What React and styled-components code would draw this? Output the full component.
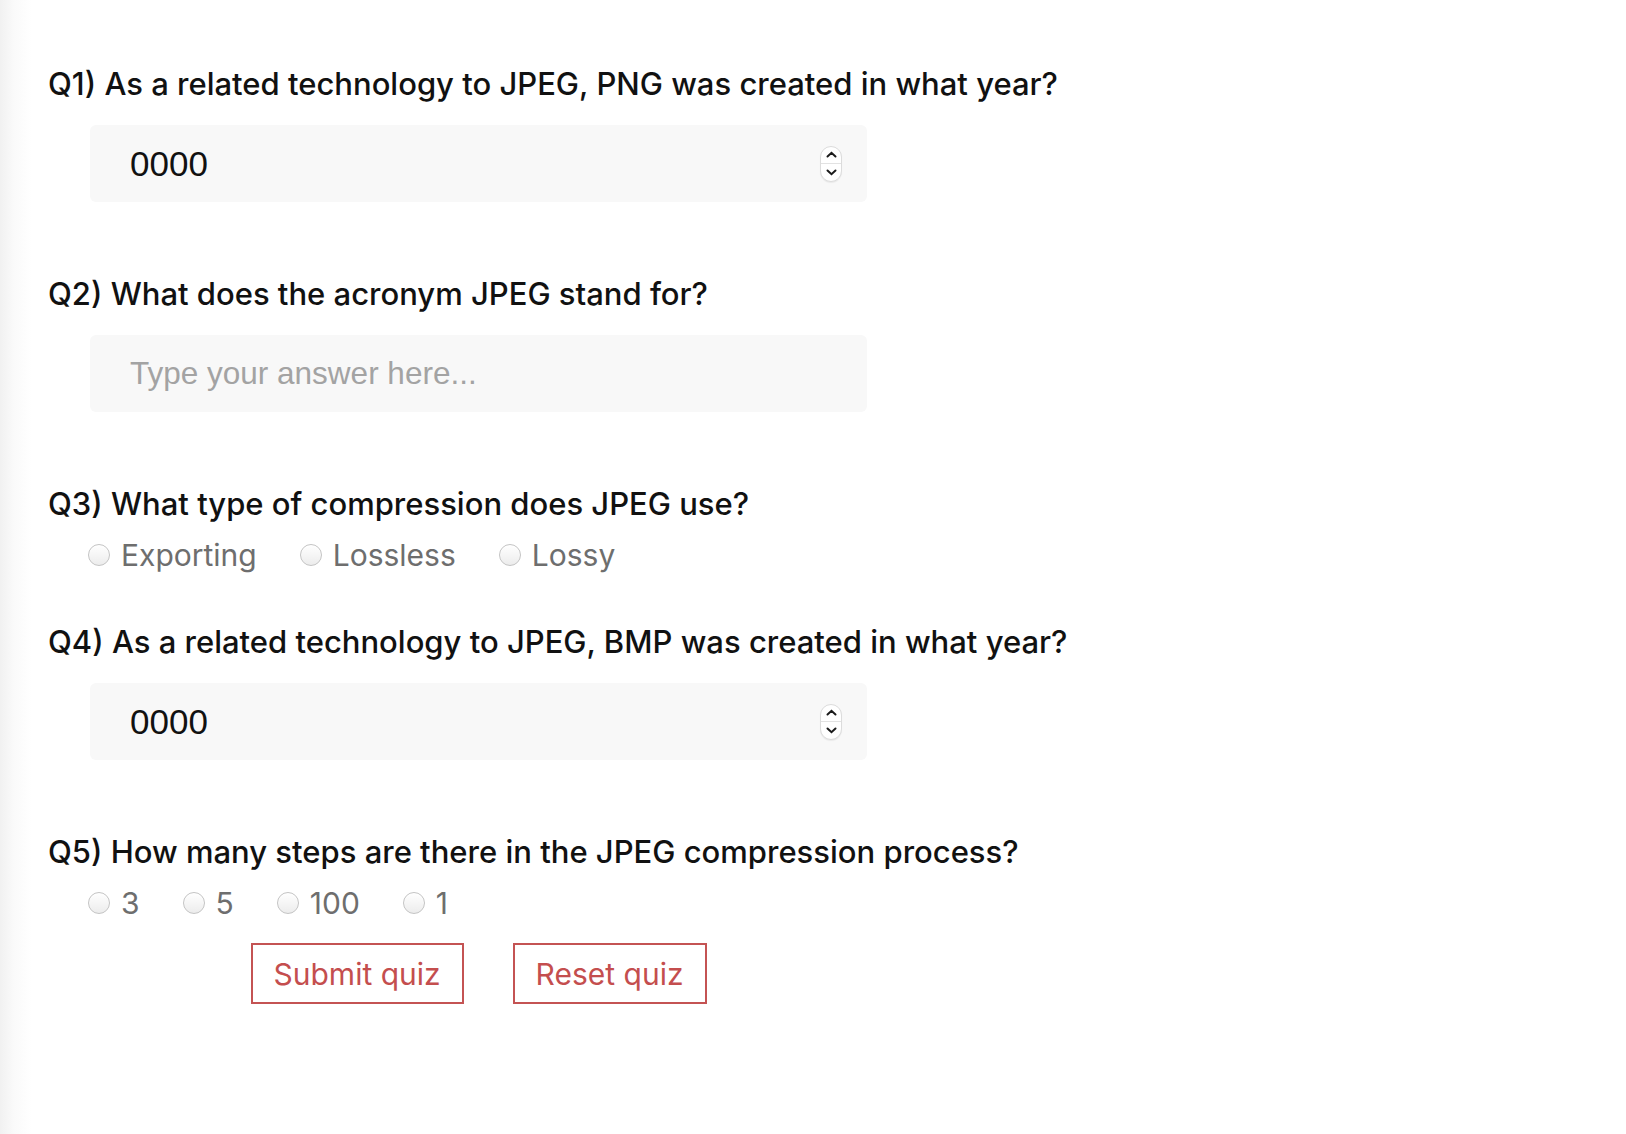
import React from "react";
import styled, { createGlobalStyle } from "styled-components";

const GlobalStyle = createGlobalStyle`
  html, body {
    margin: 0;
    padding: 0;
    min-height: 100%;
  }
  body {
    background: linear-gradient(to right, #f1f1f1 0px, #fafafa 14px, #ffffff 32px);
    min-height: 1134px;
    font-family: Inter, "Noto Sans", sans-serif;
    color: #111;
  }
`;

const questions = [
  {
    id: 1,
    title: "As a related technology to JPEG, PNG was created in what year?",
    type: "number",
  },
  { id: 2, title: "What does the acronym JPEG stand for?", type: "text" },
  {
    id: 3,
    title: "What type of compression does JPEG use?",
    type: "radio",
    options: ["Exporting", "Lossless", "Lossy"],
  },
  {
    id: 4,
    title: "As a related technology to JPEG, BMP was created in what year?",
    type: "number",
  },
  {
    id: 5,
    title: "How many steps are there in the JPEG compression process?",
    type: "radio",
    options: ["3", "5", "100", "1"],
  },
];

const Spinner = () => (
  <SpinBox>
    <svg width="11" height="7" viewBox="0 0 11 7">
      <path d="M1.5 5.5 L5.5 1.8 L9.5 5.5" fill="none" stroke="#1a1a1a" strokeWidth="2" strokeLinecap="round" />
    </svg>
    <SpinLine />
    <svg width="11" height="7" viewBox="0 0 11 7">
      <path d="M1.5 1.5 L5.5 5.2 L9.5 1.5" fill="none" stroke="#1a1a1a" strokeWidth="2" strokeLinecap="round" />
    </svg>
  </SpinBox>
);

const Answer = ({ q }) => {
  if (q.type === "radio") {
    return (
      <RadioRow>
        {q.options.map((opt) => (
          <RadioLabel key={opt}>
            <Radio type="radio" name={`q${q.id}`} value={opt} />
            {opt}
          </RadioLabel>
        ))}
      </RadioRow>
    );
  }
  if (q.type === "number") {
    return (
      <Field>
        <TextInput type="text" defaultValue="0000" $value />
        <Spinner />
      </Field>
    );
  }
  return (
    <Field>
      <TextInput type="text" placeholder="Type your answer here..." />
    </Field>
  );
};

const App = () => (
  <>
    <GlobalStyle />
    <Page>
      {questions.map((q) => (
        <Block key={q.id} $radio={q.type === "radio"} $last={q.id === questions.length}>
          <Title>
            Q{q.id}) {q.title}
          </Title>
          <Answer q={q} />
        </Block>
      ))}
      <Buttons>
        <Button>Submit quiz</Button>
        <Button>Reset quiz</Button>
      </Buttons>
    </Page>
  </>
);

const Page = styled.div`
  padding: 66px 0 0 48px;
  width: 820px;
`;

const Block = styled.div`
  margin-bottom: ${(p) => (p.$last ? "25px" : p.$radio ? "54px" : "74px")};
`;

const Title = styled.h2`
  margin: 0;
  font-size: 31px;
  line-height: 36px;
  font-weight: 500;
  color: #111;
  white-space: nowrap;
`;

const Field = styled.div`
  margin: 23px 0 0 42px;
  height: 77px;
  width: 777px;
  box-sizing: border-box;
  background: #f8f8f8;
  border-radius: 6px;
  display: flex;
  align-items: center;
  padding: 0 25px 0 40px;
`;

const TextInput = styled.input`
  flex: 1;
  border: none;
  outline: none;
  background: transparent;
  font-family: "Liberation Sans", Arial, sans-serif;
  font-size: ${(p) => (p.$value ? "35px" : "31.5px")};
  color: #111;
  padding: 0;
  &::placeholder {
    color: #a3a3a3;
  }
`;

const SpinBox = styled.div`
  width: 22px;
  height: 36px;
  box-sizing: border-box;
  border: 1px solid #dcdcdc;
  border-radius: 11px;
  background: #fff;
  display: flex;
  flex-direction: column;
  align-items: center;
  justify-content: space-evenly;
  box-shadow: 0 1px 1px rgba(0, 0, 0, 0.06);
`;

const SpinLine = styled.div`
  width: 100%;
  height: 1px;
  background: #e2e2e2;
`;

const RadioRow = styled.div`
  margin: 18px 0 0 40px;
  display: flex;
  align-items: center;
  gap: 43px;
  height: 30px;
`;

const RadioLabel = styled.label`
  display: flex;
  align-items: center;
  gap: 11px;
  font-size: 30px;
  color: #6e6e6e;
  line-height: 30px;
`;

const Radio = styled.input`
  appearance: none;
  margin: 0;
  width: 22px;
  height: 22px;
  border-radius: 50%;
  border: 1px solid #c4c4c4;
  background: linear-gradient(#ffffff, #ececec);
  box-shadow: inset 0 1px 1px rgba(255, 255, 255, 0.8);
`;

const Buttons = styled.div`
  margin-left: 42px;
  width: 777px;
  display: flex;
  justify-content: center;
  gap: 49px;
`;

const Button = styled.button`
  font-family: Inter, "Noto Sans", sans-serif;
  font-size: 30px;
  font-weight: 400;
  color: #c44e4e;
  background: #fff;
  border: 2px solid #c45353;
  height: 61px;
  padding: 0 21px;
  cursor: pointer;
`;

export default App;
